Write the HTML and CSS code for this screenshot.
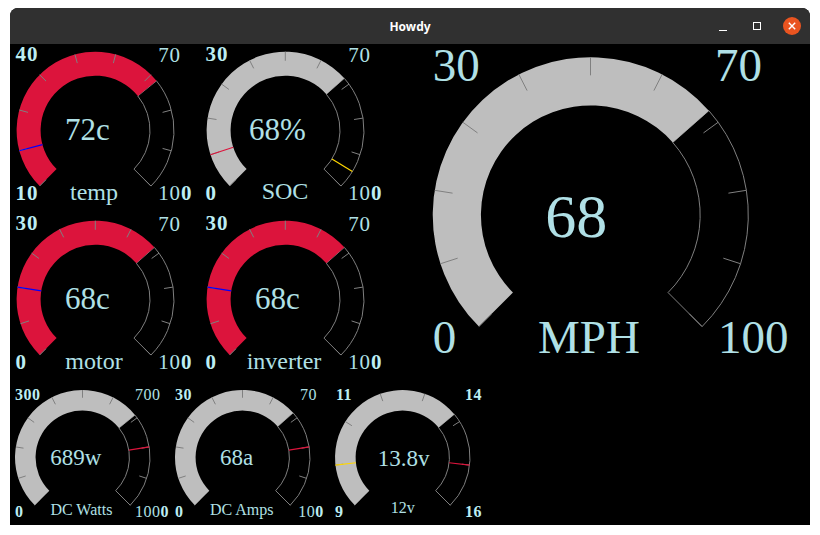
FILE: index.html
```html
<!DOCTYPE html>
<html lang="en">
<head>
<meta charset="utf-8">
<title>Howdy</title>
<link rel="stylesheet" href="styles.css">
</head>
<body>
<div class="window">
  <div class="titlebar">
    <span class="title">Howdy</span>
    <div class="controls">
      <span class="btn-min"></span>
      <span class="btn-max"></span>
      <span class="btn-close">
        <svg class="close-x" viewBox="0 0 18 18"><path d="M5.8 5.8 L12.2 12.2 M12.2 5.8 L5.8 12.2"/></svg>
      </span>
    </div>
  </div>
  <div class="content">
    <div class="top">
      <div class="small-grid">
        <svg class="gauge g-sm" data-cx="85.3" data-cy="86.4" data-r="78.7" data-min="10" data-max="100" data-step="10" data-value="72" data-fill="red" data-marks="20:blue">
          <g class="dial"></g>
          <text class="lbl-sm strong" x="5.6" y="17">40</text>
          <text class="lbl-sm" x="148.3" y="17.5">70</text>
          <text class="lbl-sm strong" x="5.6" y="155.5">10</text>
          <text class="lbl-sm" x="148.3" y="155.5">10<tspan class="strong">0</tspan></text>
          <text class="val-sm" x="77.5" y="96">72c</text>
          <text class="name-sm" x="84" y="155.5">temp</text>
        </svg>
        <svg class="gauge g-sm" data-cx="85.3" data-cy="86.4" data-r="78.7" data-min="0" data-max="100" data-step="10" data-value="68" data-fill="silver" data-marks="10:red,95:yellow">
          <g class="dial"></g>
          <text class="lbl-sm strong" x="5.6" y="17">30</text>
          <text class="lbl-sm" x="148.3" y="17.5">70</text>
          <text class="lbl-sm strong" x="5.6" y="155.5">0</text>
          <text class="lbl-sm" x="148.3" y="155.5">10<tspan class="strong">0</tspan></text>
          <text class="val-sm" x="77.5" y="96">68%</text>
          <text class="name-sm" x="85" y="154.5">SOC</text>
        </svg>
        <svg class="gauge g-sm" data-cx="85.3" data-cy="86.4" data-r="78.7" data-min="0" data-max="100" data-step="10" data-value="68" data-fill="red" data-marks="20:blue">
          <g class="dial"></g>
          <text class="lbl-sm strong" x="5.6" y="17">30</text>
          <text class="lbl-sm" x="148.3" y="17.5">70</text>
          <text class="lbl-sm strong" x="5.6" y="155.5">0</text>
          <text class="lbl-sm" x="148.3" y="155.5">10<tspan class="strong">0</tspan></text>
          <text class="val-sm" x="77.5" y="96">68c</text>
          <text class="name-sm" x="84" y="155.5">motor</text>
        </svg>
        <svg class="gauge g-sm" data-cx="85.3" data-cy="86.4" data-r="78.7" data-min="0" data-max="100" data-step="10" data-value="68" data-fill="red" data-marks="20:blue">
          <g class="dial"></g>
          <text class="lbl-sm strong" x="5.6" y="17">30</text>
          <text class="lbl-sm" x="148.3" y="17.5">70</text>
          <text class="lbl-sm strong" x="5.6" y="155.5">0</text>
          <text class="lbl-sm" x="148.3" y="155.5">10<tspan class="strong">0</tspan></text>
          <text class="val-sm" x="77.5" y="96">68c</text>
          <text class="name-sm" x="84" y="155.5">inverter</text>
        </svg>
      </div>
      <svg class="gauge g-lg" data-cx="200.5" data-cy="171" data-r="157.8" data-min="0" data-max="100" data-step="10" data-value="68" data-fill="silver" data-marks="">
        <g class="dial"></g>
        <text class="lbl-lg" x="42.7" y="36.7">30</text>
        <text class="lbl-lg" x="325" y="36.7">70</text>
        <text class="lbl-lg" x="42.7" y="309.3">0</text>
        <text class="lbl-lg" x="328" y="309.3">100</text>
        <text class="val-lg" x="186.3" y="192.7">68</text>
        <text class="name-lg" x="199" y="308.7">MPH</text>
      </svg>
    </div>
    <div class="bottom">
      <svg class="gauge g-xs" data-cx="72.5" data-cy="75.5" data-r="67.5" data-min="0" data-max="1000" data-step="100" data-value="689" data-fill="silver" data-marks="800:red">
        <g class="dial"></g>
        <text class="lbl-xs strong" x="5" y="18">300</text>
        <text class="lbl-xs" x="125" y="18">700</text>
        <text class="lbl-xs strong" x="5" y="134.7">0</text>
        <text class="lbl-xs" x="125" y="134.7">100<tspan class="strong">0</tspan></text>
        <text class="val-xs" x="65.7" y="83">689w</text>
        <text class="name-xs" x="71.4" y="133">DC Watts</text>
      </svg>
      <svg class="gauge g-xs" data-cx="72.5" data-cy="75.5" data-r="67.5" data-min="0" data-max="100" data-step="10" data-value="68" data-fill="silver" data-marks="80:red">
        <g class="dial"></g>
        <text class="lbl-xs strong" x="5" y="18">30</text>
        <text class="lbl-xs" x="130" y="18">70</text>
        <text class="lbl-xs strong" x="5" y="134.7">0</text>
        <text class="lbl-xs" x="128.3" y="134.7">10<tspan class="strong">0</tspan></text>
        <text class="val-xs" x="66.7" y="83">68a</text>
        <text class="name-xs" x="71.7" y="133">DC Amps</text>
      </svg>
      <svg class="gauge g-xs" data-cx="72.5" data-cy="75.5" data-r="67.5" data-min="9" data-max="16" data-step="1" data-value="13.8" data-fill="silver" data-marks="10:yellow,15:red">
        <g class="dial"></g>
        <text class="lbl-xs strong" x="6" y="18">11</text>
        <text class="lbl-xs strong" x="135" y="18">14</text>
        <text class="lbl-xs strong" x="5" y="134.7">9</text>
        <text class="lbl-xs strong" x="135" y="134.7">16</text>
        <text class="val-xs" x="73.7" y="83.7">13.8v</text>
        <text class="name-xs" x="72.8" y="131.3">12v</text>
      </svg>
    </div>
  </div>
</div>
<script src="gauge.js"></script>
</body>
</html>
```

FILE: styles.css
```css
html, body {
  margin: 0;
  padding: 0;
  background: #ffffff;
}

.window {
  margin: 8px 0 0 10px;
  width: 800px;
  height: 517px;
  display: flex;
  flex-direction: column;
  background: #000;
  border-radius: 8px 8px 0 0;
  overflow: hidden;
}

.titlebar {
  height: 36px;
  flex: none;
  background: #303030;
  display: grid;
  grid-template-columns: 1fr auto 1fr;
  align-items: center;
}

.title {
  grid-column: 2;
  font-family: "Noto Sans", "DejaVu Sans", sans-serif;
  font-weight: bold;
  font-size: 12px;
  color: #ffffff;
  padding-top: 1px;
}

.controls {
  grid-column: 3;
  justify-self: end;
  display: flex;
  align-items: center;
  padding-right: 9px;
}

.btn-min {
  width: 8px;
  height: 1px;
  background: #ffffff;
  margin-top: 8px;
  margin-right: 26px;
}

.btn-max {
  width: 6px;
  height: 6px;
  border: 1px solid #ffffff;
  margin-right: 22px;
}

.btn-close {
  width: 18px;
  height: 18px;
  border-radius: 50%;
  background: #e95420;
  display: flex;
}

.close-x {
  width: 18px;
  height: 18px;
}

.close-x path {
  stroke: #ffffff;
  stroke-width: 1.4;
  fill: none;
}

.content {
  flex: 1;
  display: flex;
  flex-direction: column;
  background: #000;
}

.top {
  display: flex;
}

.small-grid {
  display: grid;
  grid-template-columns: 190px 190px;
  grid-template-rows: 169px 169px;
}

.bottom {
  display: flex;
}

.gauge {
  display: block;
  overflow: visible;
}

.g-sm { width: 190px; height: 169px; }
.g-lg { width: 420px; height: 338px; }
.g-xs { width: 160px; height: 143px; }

.fill.red { fill: #dc143c; }
.fill.silver { fill: #bebebe; }

.empty {
  fill: none;
  stroke: #7f7f7f;
  stroke-width: 1;
}

.tick {
  stroke: #808080;
  stroke-width: 1;
}

.mark { stroke-width: 1.2; }
.mark.blue { stroke: #0000ff; }
.mark.red { stroke: #dc143c; }
.mark.yellow { stroke: #ffd700; }

text {
  font-family: "Liberation Serif", "Times New Roman", serif;
  fill: #b0e0e6;
}

.lbl-sm { font-size: 21px; letter-spacing: 0.8px; }
.lbl-lg { font-size: 47px; }
.lbl-xs { font-size: 16px; letter-spacing: 0.5px; }

.strong {
  font-weight: bold;
  fill: #bdeef3;
}

.val-sm { font-size: 31px; text-anchor: middle; }
.val-lg { font-size: 62px; text-anchor: middle; }
.val-xs { font-size: 23px; text-anchor: middle; }

.name-sm { font-size: 24px; text-anchor: middle; }
.name-lg { font-size: 47px; text-anchor: middle; }
.name-xs { font-size: 16px; text-anchor: middle; }
```

FILE: gauge.js
```js
(function () {
  var NS = 'http://www.w3.org/2000/svg';

  function ang(f) { return 225 - 270 * f; }

  function pt(cx, cy, r, deg) {
    var a = deg * Math.PI / 180;
    return [cx + r * Math.cos(a), cy - r * Math.sin(a)];
  }

  function band(cx, cy, R, ri, f0, f1) {
    var a0 = ang(f0), a1 = ang(f1);
    var large = (a0 - a1) > 180 ? 1 : 0;
    var p0 = pt(cx, cy, R, a0), p1 = pt(cx, cy, R, a1);
    var p2 = pt(cx, cy, ri, a1), p3 = pt(cx, cy, ri, a0);
    return 'M' + p0[0].toFixed(2) + ' ' + p0[1].toFixed(2) +
      ' A' + R + ' ' + R + ' 0 ' + large + ' 1 ' + p1[0].toFixed(2) + ' ' + p1[1].toFixed(2) +
      ' L' + p2[0].toFixed(2) + ' ' + p2[1].toFixed(2) +
      ' A' + ri.toFixed(2) + ' ' + ri.toFixed(2) + ' 0 ' + large + ' 0 ' + p3[0].toFixed(2) + ' ' + p3[1].toFixed(2) + ' Z';
  }

  function add(parent, tag, attrs) {
    var el = document.createElementNS(NS, tag);
    for (var k in attrs) el.setAttribute(k, attrs[k]);
    parent.appendChild(el);
    return el;
  }

  document.querySelectorAll('svg.gauge').forEach(function (svg) {
    var d = svg.dataset;
    var cx = +d.cx, cy = +d.cy, R = +d.r, ri = R * 0.695;
    var min = +d.min, max = +d.max, step = +d.step, val = +d.value;
    var f = (val - min) / (max - min);
    var g = svg.querySelector('.dial');

    add(g, 'path', { d: band(cx, cy, R, ri, f, 1), 'class': 'empty' });
    add(g, 'path', { d: band(cx, cy, R, ri, 0, f), 'class': 'fill ' + d.fill });

    var n = Math.round((max - min) / step);
    for (var i = 0; i <= n; i++) {
      var a = ang(i / n);
      var o = pt(cx, cy, R, a), inn = pt(cx, cy, R * 0.885, a);
      add(g, 'line', { x1: o[0].toFixed(2), y1: o[1].toFixed(2), x2: inn[0].toFixed(2), y2: inn[1].toFixed(2), 'class': 'tick' });
    }

    (d.marks || '').split(',').filter(Boolean).forEach(function (m) {
      var parts = m.split(':');
      var a = ang((+parts[0] - min) / (max - min));
      var o = pt(cx, cy, R, a), inn = pt(cx, cy, ri, a);
      add(g, 'line', { x1: o[0].toFixed(2), y1: o[1].toFixed(2), x2: inn[0].toFixed(2), y2: inn[1].toFixed(2), 'class': 'mark ' + parts[1] });
    });
  });
})();
```
